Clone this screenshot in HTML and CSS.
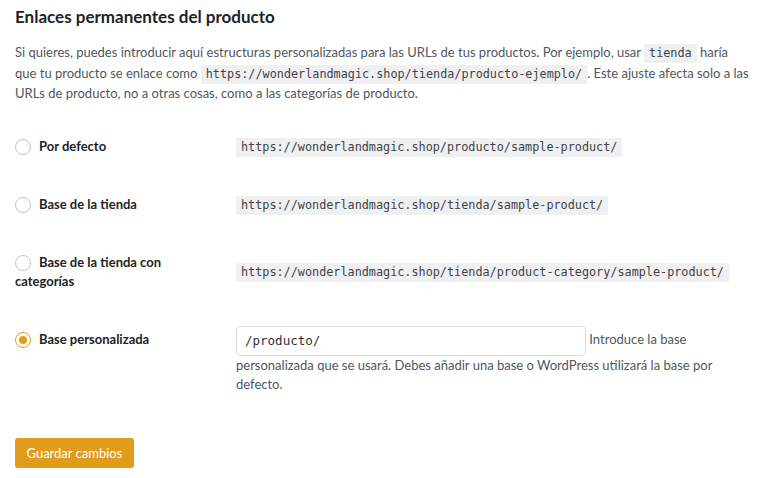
FILE: index.html
```html
<!DOCTYPE html>
<html lang="es">
<head>
<meta charset="utf-8">
<link rel="stylesheet" href="styles.css">
</head>
<body>
<div class="wrap">
  <h2 class="title">Enlaces permanentes del producto</h2>
  <p class="intro">Si quieres, puedes introducir aquí estructuras personalizadas para las URLs de tus productos. Por ejemplo, usar <code>tienda</code> haría que tu producto se enlace como <code>https://wonderlandmagic.shop/tienda/producto-ejemplo/</code>. Este ajuste afecta solo a las URLs de producto, no a otras cosas, como a las categorías de producto.</p>

  <div class="form-table">
    <div class="row">
      <label class="th"><span class="radio"></span>Por defecto</label>
      <div class="td"><code>https://wonderlandmagic.shop/producto/sample-product/</code></div>
    </div>
    <div class="row">
      <label class="th"><span class="radio"></span>Base de la tienda</label>
      <div class="td"><code>https://wonderlandmagic.shop/tienda/sample-product/</code></div>
    </div>
    <div class="row">
      <label class="th"><span class="radio"></span>Base de la tienda con categorías</label>
      <div class="td mid"><code>https://wonderlandmagic.shop/tienda/product-category/sample-product/</code></div>
    </div>
    <div class="row">
      <label class="th"><span class="radio checked"></span>Base personalizada</label>
      <div class="td custom"><input class="text" type="text" value="/producto/"> <span class="desc">Introduce la base personalizada que se usará. Debes añadir una base o WordPress utilizará la base por defecto.</span></div>
    </div>
  </div>

  <button class="button">Guardar cambios</button>
</div>
</body>
</html>
```
FILE: styles.css
```css
html, body {
  margin: 0;
  padding: 0;
  background: #fff;
}
body {
  font-family: Lato, "Noto Sans", sans-serif;
  font-size: 13px;
  color: #50575e;
}
.wrap {
  padding: 0 15px;
}
.title {
  font-size: 17px;
  font-weight: 700;
  color: #1d2327;
  margin: 0;
  padding-top: 6px;
  line-height: 22px;
}
.intro {
  margin: 14px 0 0;
  line-height: 20.5px;
}
code {
  font-family: "DejaVu Sans Mono", monospace;
  font-size: 11.8px;
  line-height: 1;
  background: #f0f0f1;
  color: #3c434a;
  padding: 2px 5px 3px;
}
.form-table {
  margin-top: 13px;
}
.row {
  display: grid;
  grid-template-columns: 221px 1fr;
  padding: 20px 0 19px;
}
.th {
  font-weight: 700;
  color: #1d2327;
  line-height: 19px;
  padding-right: 20px;
}
.radio {
  display: inline-block;
  box-sizing: border-box;
  width: 16px;
  height: 16px;
  border: 1px solid #c3c4c7;
  border-radius: 50%;
  vertical-align: top;
  margin: 2px 8px 0 0;
  background: #fff;
  position: relative;
}
.radio.checked {
  border-color: #e09c1a;
}
.radio.checked::after {
  content: "";
  position: absolute;
  left: 3px;
  top: 3px;
  width: 8px;
  height: 8px;
  border-radius: 50%;
  background: #e09c1a;
}
.td {
  line-height: 19px;
}
.td.mid {
  align-self: center;
}
.td.custom {
  margin-top: -4px;
}
.text {
  box-sizing: border-box;
  width: 350px;
  height: 30px;
  border: 1px solid #dcdcde;
  border-radius: 4px;
  padding: 0 8px;
  font-family: "DejaVu Sans Mono", monospace;
  font-size: 12.5px;
  color: #2c3338;
  vertical-align: middle;
}
.button {
  margin-top: 25px;
  background: #e09c1a;
  color: #fff;
  border: none;
  border-radius: 3px;
  height: 30px;
  padding: 0 11.5px;
  font-family: Lato, "Noto Sans", sans-serif;
  font-size: 13px;
}
```
